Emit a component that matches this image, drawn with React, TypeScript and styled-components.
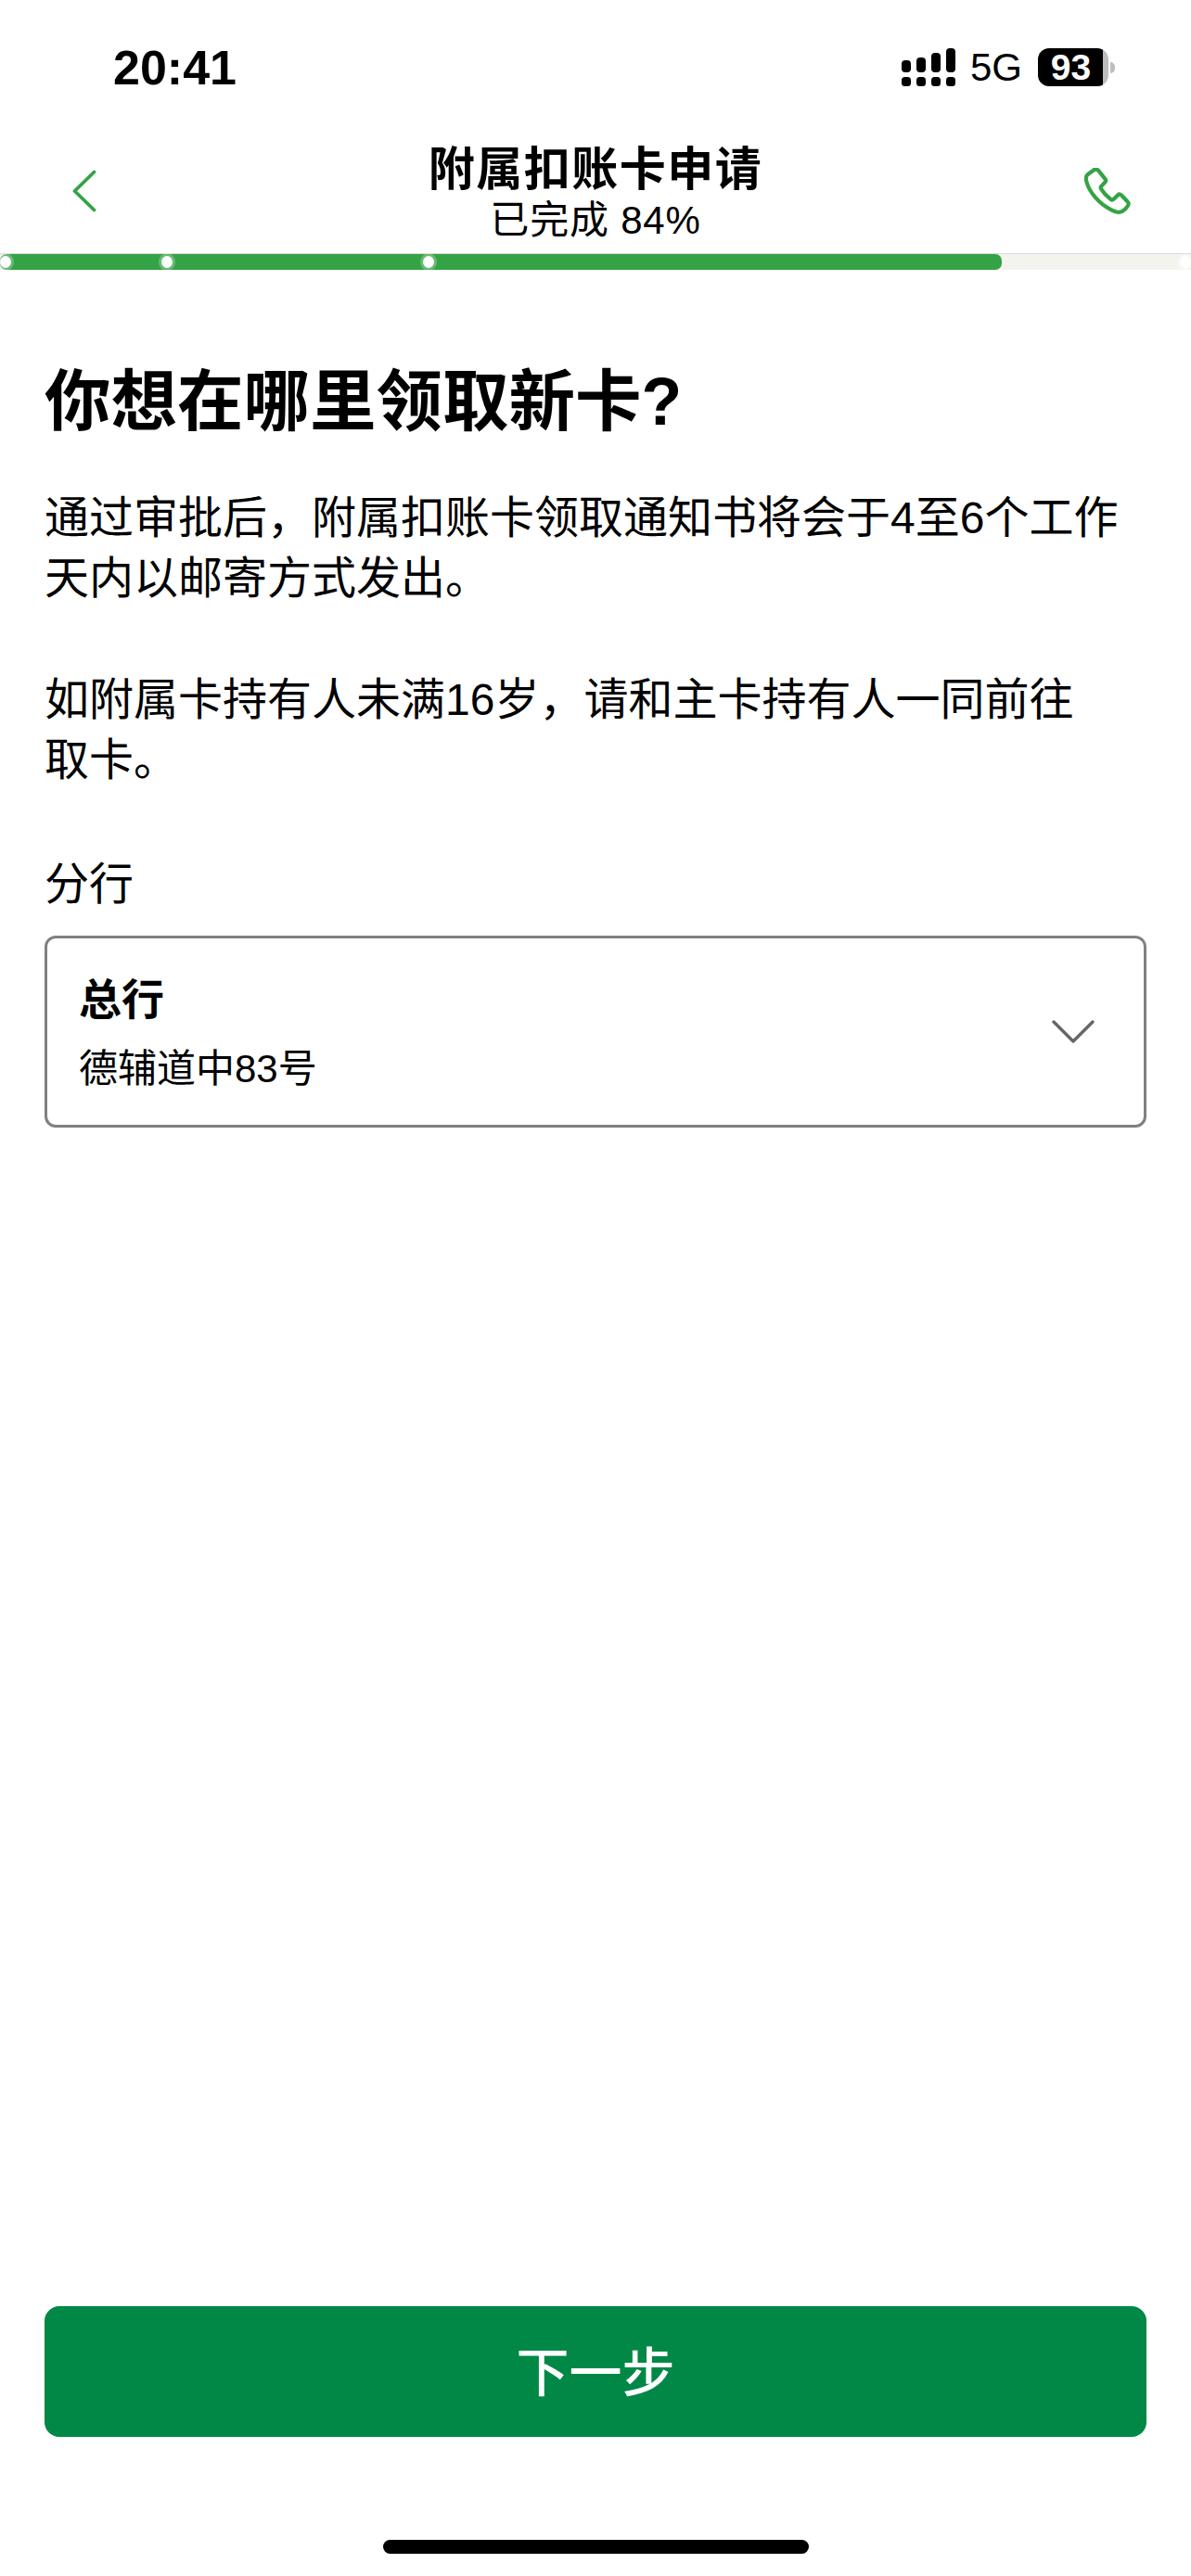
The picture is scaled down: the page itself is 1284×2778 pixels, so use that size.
import React from 'react';
import styled, { createGlobalStyle } from 'styled-components';

const GREEN = '#34a345';
const SANS = '"Liberation Sans", "Noto Sans CJK SC", sans-serif';

const GlobalStyle = createGlobalStyle`
  html, body {
    margin: 0;
    padding: 0;
    background: #fff;
  }
  * {
    box-sizing: border-box;
  }
`;

const Page = styled.div`
  display: flex;
  flex-direction: column;
  width: 1284px;
  height: 2778px;
  overflow: hidden;
  background: #fff;
  color: #000;
  font-family: ${SANS};
`;

const StatusBar = styled.div`
  display: flex;
  align-items: flex-start;
  justify-content: space-between;
  height: 146px;
  padding: 44px 82px 0 122px;
`;

const Clock = styled.div`
  font-size: 52px;
  font-weight: 700;
  line-height: 58px;
`;

const StatusIcons = styled.div`
  display: flex;
  align-items: center;
  height: 41px;
  margin-top: 8px;
`;

const NetworkLabel = styled.span`
  margin: 0 17px 0 16px;
  font-size: 42px;
  line-height: 41px;
`;

const Battery = styled.div`
  display: flex;
  align-items: center;
  justify-content: center;
  width: 76px;
  height: 41px;
  padding-right: 5px;
  border-radius: 12px;
  background: linear-gradient(to right, #000 70px, #bdbdbd 70px);
  color: #fff;
  font-size: 39px;
  font-weight: 700;
`;

const BatteryNub = styled.div`
  width: 5px;
  height: 12px;
  margin-left: 2px;
  border-radius: 0 6px 6px 0;
  background: #bdbdbd;
`;

const Header = styled.header`
  display: grid;
  grid-template-columns: 1fr auto 1fr;
  align-items: center;
  height: 127px;
  padding: 0 65px;
`;

const HeaderButton = styled.div<{ $end?: boolean }>`
  display: flex;
  justify-content: ${(p) => (p.$end ? 'flex-end' : 'flex-start')};
  margin: 0 0 8px ${(p) => (p.$end ? 0 : 13)}px;
`;

const HeaderText = styled.div`
  margin-top: -3px;
  text-align: center;
`;

const Title = styled.div`
  font-size: 50px;
  font-weight: 700;
  line-height: 58px;
  letter-spacing: 1.5px;
`;

const Subtitle = styled.div`
  margin-top: 2px;
  font-size: 42px;
  line-height: 48px;
  letter-spacing: 0.8px;
`;

const Progress = styled.div`
  position: relative;
  flex: none;
  height: 18px;
  border-top: 1px solid #d9d9d9;
  background: #f4f4ef;
`;

const ProgressFill = styled.div`
  height: 100%;
  border-radius: 7px;
  background: ${GREEN};
`;

const ProgressDot = styled.span`
  position: absolute;
  top: 2px;
  width: 12px;
  height: 13px;
  margin-left: -6px;
  border-radius: 50%;
  background: #fff;
  box-shadow: 0 0 0 3px rgba(255, 255, 255, 0.25);
`;

const Content = styled.main`
  display: flex;
  flex: 1;
  flex-direction: column;
  padding: 0 48px;
`;

const Heading = styled.h1`
  margin: 96px 0 0;
  font-size: 71.5px;
  font-weight: 700;
  line-height: 92px;
`;

const Paragraph = styled.p`
  margin: 47px 0 0;
  font-size: 48px;
  line-height: 65px;
  & + & {
    margin-top: 66px;
  }
`;

const FieldLabel = styled.div`
  margin-top: 69px;
  font-size: 48px;
  line-height: 65px;
`;

const Select = styled.div`
  display: flex;
  align-items: center;
  justify-content: space-between;
  height: 207px;
  margin-top: 23px;
  padding: 0 53px 0 34px;
  border: 3px solid #808080;
  border-radius: 12px;
`;

const SelectText = styled.div`
  padding-top: 5px;
`;

const SelectName = styled.div`
  font-size: 46px;
  font-weight: 700;
  line-height: 60px;
`;

const SelectAddress = styled.div`
  margin-top: 15px;
  font-size: 42px;
  line-height: 60px;
`;

const NextButton = styled.button`
  flex: none;
  height: 141px;
  margin-top: auto;
  padding: 0 0 8px;
  border: 0;
  border-radius: 16px;
  background: #018846;
  color: #fff;
  font-family: ${SANS};
  font-size: 57px;
  font-weight: 500;
`;

const HomeArea = styled.div`
  display: flex;
  flex: none;
  justify-content: center;
  height: 150px;
  padding-top: 111px;
`;

const HomeIndicator = styled.div`
  width: 459px;
  height: 15px;
  border-radius: 8px;
  background: #000;
`;

const SIGNAL_TOPS = [13, 10, 5, 0];

function SignalIcon() {
  return (
    <svg width="58" height="41" viewBox="0 0 58 41" fill="#000">
      {SIGNAL_TOPS.map((top, i) => (
        <g key={top}>
          <rect x={i * 16} y={top} width="10" height={26 - top} rx="4" />
          <rect x={i * 16} y="31" width="10" height="10" rx="3.5" />
        </g>
      ))}
    </svg>
  );
}

function BackIcon() {
  return (
    <svg width="26" height="46" viewBox="0 0 26 46" fill="none" stroke={GREEN} strokeWidth="3.8" strokeLinecap="round" strokeLinejoin="round">
      <path d="M23.500 2.500 2.500 23l21 20.500" />
    </svg>
  );
}

function PhoneIcon() {
  return (
    <svg width="50" height="50" viewBox="0 0 50 50" fill="none" stroke={GREEN} strokeWidth="4.2" strokeLinejoin="round">
      <path d="M10 2.500 3.600 7.200C1.400 9 1.600 12 2.400 15c3 11.500 13.600 23.500 25.800 29.800 3.800 2 8.700 4.200 12.300 2.400 3-1.500 6.300-5.300 7-7.700.4-1.500-.4-2.700-1.300-3.600l-6.500-6.600c-1.200-1.100-2.500-1-3.400-.1l-4.600 4.600c-1 .9-2.200.9-3.400 0-3.900-2.900-7.700-7-10.100-11-.7-1.100-.6-2.300.3-3.200l3.900-4.100c1-1 1-2.300.1-3.400L15.600 3.400C14 1.500 11.800 1.200 10 2.500Z" />
    </svg>
  );
}

function ChevronIcon() {
  return (
    <svg width="46" height="26" viewBox="0 0 46 26" fill="none" stroke="#666" strokeWidth="3.4" strokeLinecap="round" strokeLinejoin="round">
      <path d="M2 2l21 21L44 2" />
    </svg>
  );
}

const STEP_DOTS = [6, 180, 462, 1278];

export default function App() {
  return (
    <Page>
      <GlobalStyle />
      <StatusBar>
        <Clock>20:41</Clock>
        <StatusIcons>
          <SignalIcon />
          <NetworkLabel>5G</NetworkLabel>
          <Battery>93</Battery>
          <BatteryNub />
        </StatusIcons>
      </StatusBar>
      <Header>
        <HeaderButton>
          <BackIcon />
        </HeaderButton>
        <HeaderText>
          <Title>附属扣账卡申请</Title>
          <Subtitle>已完成 84%</Subtitle>
        </HeaderText>
        <HeaderButton $end>
          <PhoneIcon />
        </HeaderButton>
      </Header>
      <Progress>
        <ProgressFill style={{ width: `${(1080 / 1284) * 100}%` }} />
        {STEP_DOTS.map((x) => (
          <ProgressDot key={x} style={{ left: x }} />
        ))}
      </Progress>
      <Content>
        <Heading>你想在哪里领取新卡?</Heading>
        <Paragraph>通过审批后，附属扣账卡领取通知书将会于4至6个工作天内以邮寄方式发出。</Paragraph>
        <Paragraph>
          如附属卡持有人未满16岁，请和主卡持有人一同前往
          <br />
          取卡。
        </Paragraph>
        <FieldLabel>分行</FieldLabel>
        <Select>
          <SelectText>
            <SelectName>总行</SelectName>
            <SelectAddress>德辅道中83号</SelectAddress>
          </SelectText>
          <ChevronIcon />
        </Select>
        <NextButton>下一步</NextButton>
      </Content>
      <HomeArea>
        <HomeIndicator />
      </HomeArea>
    </Page>
  );
}
